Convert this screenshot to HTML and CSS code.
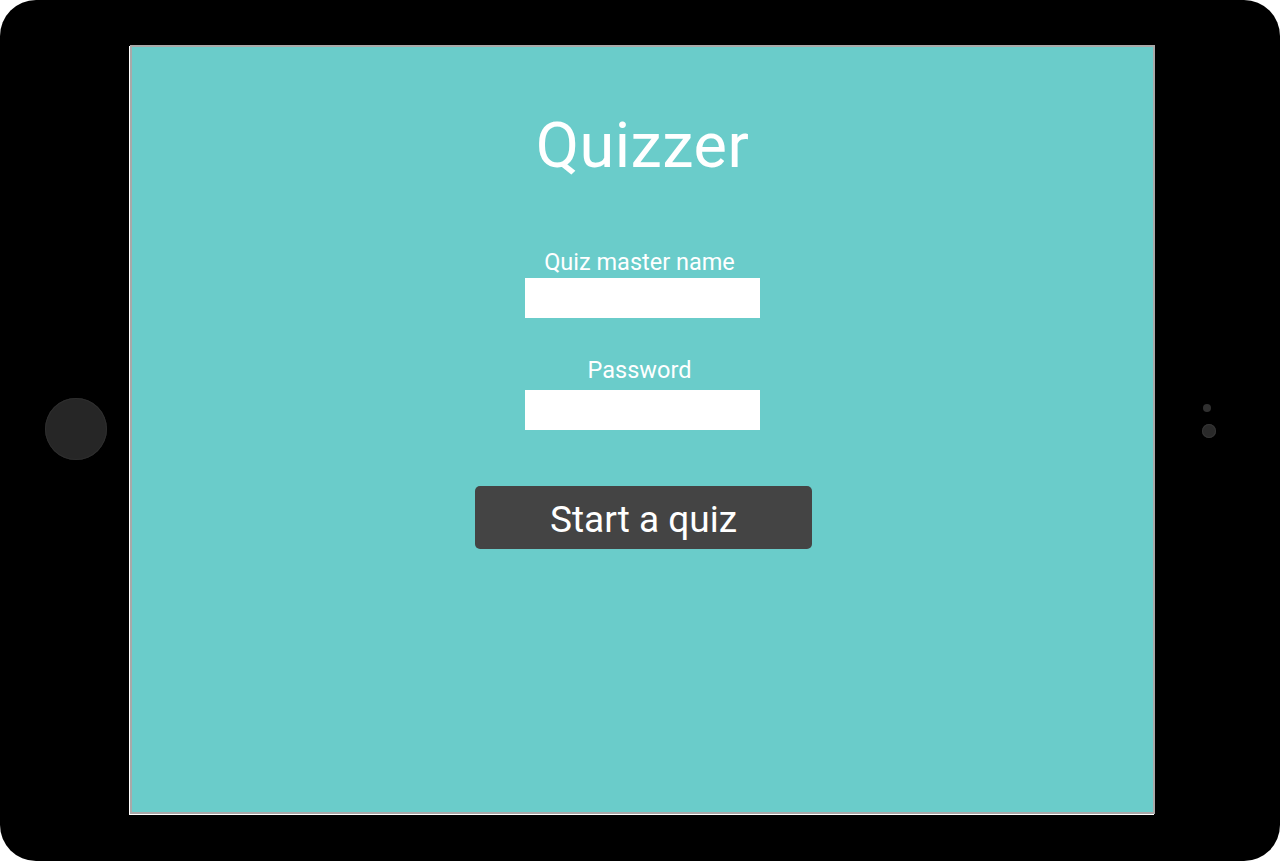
FILE: index.html
```html
<!DOCTYPE html>
<html>
<head>
<meta charset="utf-8">
<link rel="stylesheet" href="styles.css">
</head>
<body>
<div class="device">
  <div class="side side-left">
    <div class="home-button"></div>
  </div>
  <div class="screen">
    <h1 class="title">Quizzer</h1>
    <form class="login">
      <label class="field">
        <span class="field-label">Quiz master name</span>
        <input class="field-input" type="text">
      </label>
      <label class="field field-second">
        <span class="field-label">Password</span>
        <input class="field-input" type="password">
      </label>
      <button class="start-button" type="button">Start a quiz</button>
    </form>
  </div>
  <div class="side side-right">
    <div class="sensor"></div>
    <div class="camera"></div>
  </div>
</div>
</body>
</html>
```

FILE: styles.css
```css
html, body {
  margin: 0;
  padding: 0;
  background: #ffffff;
}

.device {
  width: 1280px;
  height: 861px;
  background: #000000;
  border-radius: 36px;
  display: flex;
  box-sizing: border-box;
  padding: 45px 0 47px 0;
}

.side {
  display: flex;
  flex-direction: column;
  align-items: center;
  justify-content: center;
  box-sizing: border-box;
}

.side-left {
  width: 130px;
  padding-left: 22px;
}

.side-right {
  width: 125px;
  padding-right: 17px;
  gap: 12px;
}

.home-button {
  width: 62px;
  height: 62px;
  border-radius: 50%;
  background: #262626;
  box-shadow: inset 0 0 0 1px #2e2e2e;
  margin-top: -2px;
}

.sensor {
  width: 8px;
  height: 8px;
  border-radius: 50%;
  background: #303030;
  margin-top: -17px;
  margin-left: -4px;
}

.camera {
  width: 14px;
  height: 14px;
  border-radius: 50%;
  background: #2a2a2a;
  box-shadow: inset 0 0 0 1px #353535;
}

.screen {
  width: 1025px;
  height: 769px;
  box-sizing: border-box;
  background: #6accca;
  border: 2px solid #a9a9a9;
  box-shadow: -1px 1px 0 0 #ffffff;
  display: flex;
  flex-direction: column;
  align-items: center;
  font-family: Roboto, "Liberation Sans", sans-serif;
  color: #ffffff;
}

.title {
  margin: 59px 0 0 0;
  font-size: 63px;
  font-weight: 400;
  line-height: 80px;
  letter-spacing: 0.5px;
}

.login {
  margin-top: 61px;
  display: flex;
  flex-direction: column;
  align-items: center;
}

.field {
  display: flex;
  flex-direction: column;
  align-items: center;
}

.field-second {
  margin-top: 37px;
}

.field-second .field-input {
  margin-top: 5px;
}

.field-label {
  font-size: 23.5px;
  line-height: 30px;
  margin-left: -6px;
}

.field-input {
  width: 235px;
  height: 40px;
  border: none;
  margin: 1px 0 0 0;
  padding: 0 8px;
  box-sizing: border-box;
  background: #ffffff;
  outline: none;
}

.start-button {
  width: 337px;
  height: 63px;
  margin-top: 56px;
  margin-left: 2px;
  border: none;
  border-radius: 5px;
  background: #444444;
  color: #ffffff;
  font-family: Roboto, "Liberation Sans", sans-serif;
  font-size: 37px;
  line-height: 59px;
  padding: 4px 0 0 0;
  box-sizing: border-box;
}
```
